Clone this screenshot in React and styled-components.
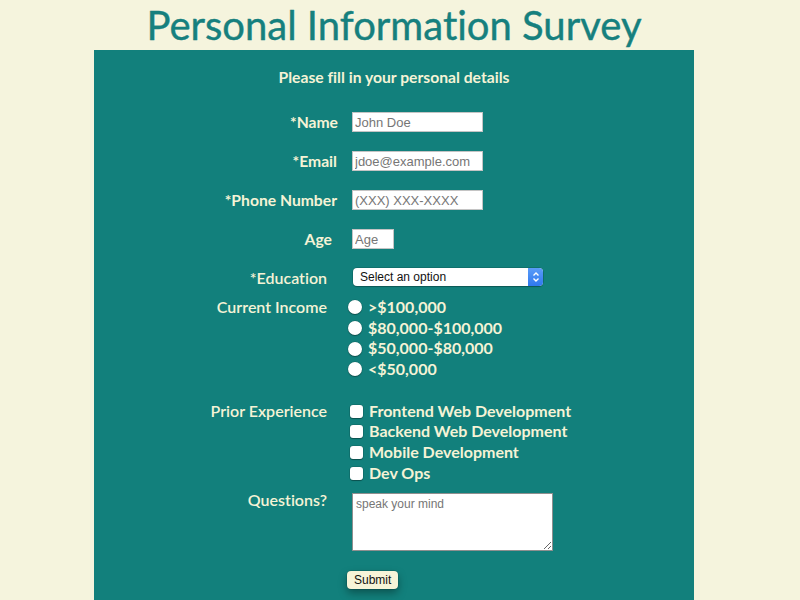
import React from "react";
import styled, { createGlobalStyle } from "styled-components";

const GlobalStyle = createGlobalStyle`
  html, body {
    margin: 0;
    padding: 0;
    overflow: hidden;
    background: #f5f4dd;
  }
  body {
    font-family: Lato, "Open Sans", sans-serif;
    font-variant-ligatures: none;
  }
`;

const Page = styled.div`
  width: 600px;
  margin-left: 94px;
`;

const Title = styled.h1`
  margin: 0;
  height: 50px;
  font-family: Lato, sans-serif;
  font-weight: 400;
  font-size: 40px;
  line-height: 50px;
  color: #16807e;
  -webkit-text-stroke: 0.4px #16807e;
  text-align: center;
  white-space: nowrap;
  font-variant-ligatures: none;
`;

const Panel = styled.form`
  background: #12807c;
  padding: 18px 0 20px;
  color: #f5f3d6;
`;

const Subtitle = styled.p`
  margin: 0 0 26px;
  text-align: center;
  font-size: 15.7px;
  font-weight: 700;
  line-height: 18px;
`;

const Row = styled.div`
  display: grid;
  grid-template-columns: 258px 1fr;
  align-items: ${(p) => (p.$top ? "start" : "center")};
  margin-top: ${(p) => p.$space || 0}px;
`;

const Label = styled.label`
  text-align: right;
  padding-right: ${(p) => p.$inset || 25}px;
  font-size: ${(p) => p.$size || 15.7}px;
  font-weight: ${(p) => p.$weight || 700};
  line-height: 18px;
  white-space: nowrap;
  margin-top: ${(p) => p.$nudge || 0}px;
`;

const TextInput = styled.input`
  box-sizing: border-box;
  width: ${(p) => p.$w}px;
  height: 20px;
  border: 1px solid #c4c4c4;
  padding: 0 2px;
  font-family: "Liberation Sans", Arial, sans-serif;
  font-size: 13px;
  color: #333;
  outline: none;
  &::placeholder {
    color: #767676;
  }
`;

const SelectWrap = styled.div`
  position: relative;
  width: 190px;
  height: 18px;
  margin-left: 1px;
`;

const Select = styled.select`
  appearance: none;
  box-sizing: border-box;
  display: block;
  width: 100%;
  height: 100%;
  border: none;
  border-radius: 4px;
  background: #fff;
  box-shadow: 0 0 0 0.5px rgba(0, 0, 0, 0.25), 0 1px 1px rgba(0, 0, 0, 0.2);
  padding: 0 0 0 7px;
  font-family: "Liberation Sans", Arial, sans-serif;
  font-size: 12px;
  color: #111;
  outline: none;
`;

const Stepper = styled.span`
  position: absolute;
  right: 0;
  top: 0;
  width: 15px;
  height: 18px;
  border-radius: 0 4px 4px 0;
  background: linear-gradient(#5a9cf8, #2f78ee);
  display: flex;
  align-items: center;
  justify-content: center;
  pointer-events: none;
`;

const Options = styled.div`
  display: flex;
  flex-direction: column;
  margin-left: ${(p) => p.$shift || 0}px;
`;

const Option = styled.label`
  display: flex;
  align-items: center;
  gap: 6px;
  height: 20.7px;
  font-size: 16px;
  font-weight: 700;
  white-space: nowrap;
`;

const Radio = styled.input.attrs({ type: "radio" })`
  appearance: none;
  margin: 2px 0 0;
  width: 14px;
  height: 14px;
  border-radius: 50%;
  background: #fff;
  box-shadow: 0 0 0 0.5px rgba(0, 0, 0, 0.2), 0 1px 1px rgba(0, 0, 0, 0.3);
`;

const Check = styled.input.attrs({ type: "checkbox" })`
  appearance: none;
  margin: 2px 0 0;
  width: 13px;
  height: 13px;
  border-radius: 3px;
  background: #fff;
  box-shadow: 0 0 0 0.5px rgba(0, 0, 0, 0.2), 0 1px 1px rgba(0, 0, 0, 0.3);
`;

const TextArea = styled.textarea`
  display: block;
  box-sizing: border-box;
  width: 201px;
  height: 58px;
  margin-top: 2px;
  border: 1px solid #8f8f8f;
  padding: 3px 3px;
  font-family: "Liberation Sans", Arial, sans-serif;
  font-size: 12px;
  outline: none;
  resize: both;
  &::placeholder {
    color: #767676;
  }
`;

const Submit = styled.button`
  display: block;
  margin-left: -5px;
  height: 18px;
  padding: 0 7px;
  border: none;
  border-radius: 4px;
  background: #f7f4d8;
  box-shadow: 0 0 0 0.5px rgba(0, 0, 0, 0.2), 0 4px 8px rgba(0, 0, 0, 0.35);
  font-family: "Liberation Sans", Arial, sans-serif;
  font-size: 12px;
  color: #111;
  line-height: 18px;
`;

const incomes = [">$100,000", "$80,000-$100,000", "$50,000-$80,000", "<$50,000"];
const skills = [
  "Frontend Web Development",
  "Backend Web Development",
  "Mobile Development",
  "Dev Ops",
];

const App = () => {
  return (
    <>
      <GlobalStyle />
      <Page>
        <Title>Personal Information Survey</Title>
        <Panel onSubmit={(e) => e.preventDefault()}>
          <Subtitle>Please fill in your personal details</Subtitle>

          <Row>
            <Label $inset={14}>*Name</Label>
            <TextInput $w={131} placeholder="John Doe" />
          </Row>
          <Row $space={19}>
            <Label $inset={15}>*Email</Label>
            <TextInput $w={131} placeholder="jdoe@example.com" />
          </Row>
          <Row $space={19}>
            <Label $inset={15}>*Phone Number</Label>
            <TextInput $w={131} placeholder="(XXX) XXX-XXXX" />
          </Row>
          <Row $space={19}>
            <Label $inset={20}>Age</Label>
            <TextInput $w={42} placeholder="Age" />
          </Row>
          <Row $top $space={19}>
            <Label $size={16} $weight={600} $nudge={1}>*Education</Label>
            <SelectWrap>
              <Select defaultValue="">
                <option value="">Select an option</option>
                <option>High School</option>
                <option>Bachelor's</option>
                <option>Master's</option>
              </Select>
              <Stepper>
                <svg width="8" height="12" viewBox="0 0 8 12" fill="none" stroke="#fff" strokeWidth="1.4">
                  <path d="M1.5 4.5 L4 2 L6.5 4.5" />
                  <path d="M1.5 7.5 L4 10 L6.5 7.5" />
                </svg>
              </Stepper>
            </SelectWrap>
          </Row>

          <Row $top $space={9}>
            <Label $size={16} $weight={600} $nudge={2}>Current Income</Label>
            <Options $shift={-4}>
              {incomes.map((v) => (
                <Option key={v}>
                  <Radio name="income" />
                  {v}
                </Option>
              ))}
            </Options>
          </Row>

          <Row $top $space={21}>
            <Label $size={16} $weight={600} $nudge={2}>Prior Experience</Label>
            <Options $shift={-2}>
              {skills.map((v) => (
                <Option key={v}>
                  <Check />
                  {v}
                </Option>
              ))}
            </Options>
          </Row>

          <Row $top $space={8}>
            <Label $size={16} $weight={600}>Questions?</Label>
            <TextArea placeholder="speak your mind" />
          </Row>

          <Row $top $space={20}>
            <span />
            <div>
              <Submit type="submit">Submit</Submit>
            </div>
          </Row>
        </Panel>
      </Page>
    </>
  );
};

export default App;
